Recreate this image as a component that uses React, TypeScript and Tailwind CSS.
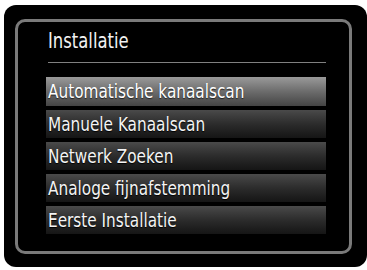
import React from 'react';

const items = [
  'Automatische kanaalscan',
  'Manuele Kanaalscan',
  'Netwerk Zoeken',
  'Analoge fijnafstemming',
  'Eerste Installatie',
];

export default function App() {
  const font = { fontFamily: '"Liberation Sans Narrow", "DejaVu Sans Condensed", "Liberation Sans", sans-serif' };
  return (
    <div className="w-[367px] h-[270px] bg-white pt-[5px] pl-[4px] overflow-hidden" style={font}>
      <div className="w-[363px] h-[262px] rounded-[12px] bg-black pt-[14px] pl-[11px]">
        <div className="w-[337px] h-[235px] rounded-[10px] border-[3px] border-[#7a7a7a] bg-black pl-[28px] pr-[23px] pt-[7px]">
          <h1 className="text-[22px] leading-[24px] text-[#f2f2f2] pl-[2px]">
            <span className="inline-block origin-left scale-x-[0.83] whitespace-nowrap">Installatie</span>
          </h1>
          <div className="mt-[9px] h-px bg-[#808080] ml-[2px]" />
          <div className="mt-[14px] flex flex-col gap-[4px]">
            {items.map((label, i) => (
              <div
                key={label}
                className={
                  i === 0
                    ? 'h-[29px] leading-[29px] pl-[2px] text-[20px] text-white bg-gradient-to-b from-[#9a9a9a] via-[#6c6c6c] to-[#454545] [text-shadow:0_1px_1px_#222]'
                    : 'h-[28px] leading-[28px] pl-[2px] text-[20px] text-[#f4f4f4] bg-gradient-to-b from-[#4a4a4a] via-[#2c2c2c] to-[#151515] [text-shadow:0_1px_1px_#000]'
                }
              >
                <span className="inline-block origin-left scale-x-[0.85] whitespace-nowrap">{label}</span>
              </div>
            ))}
          </div>
        </div>
      </div>
    </div>
  );
}
